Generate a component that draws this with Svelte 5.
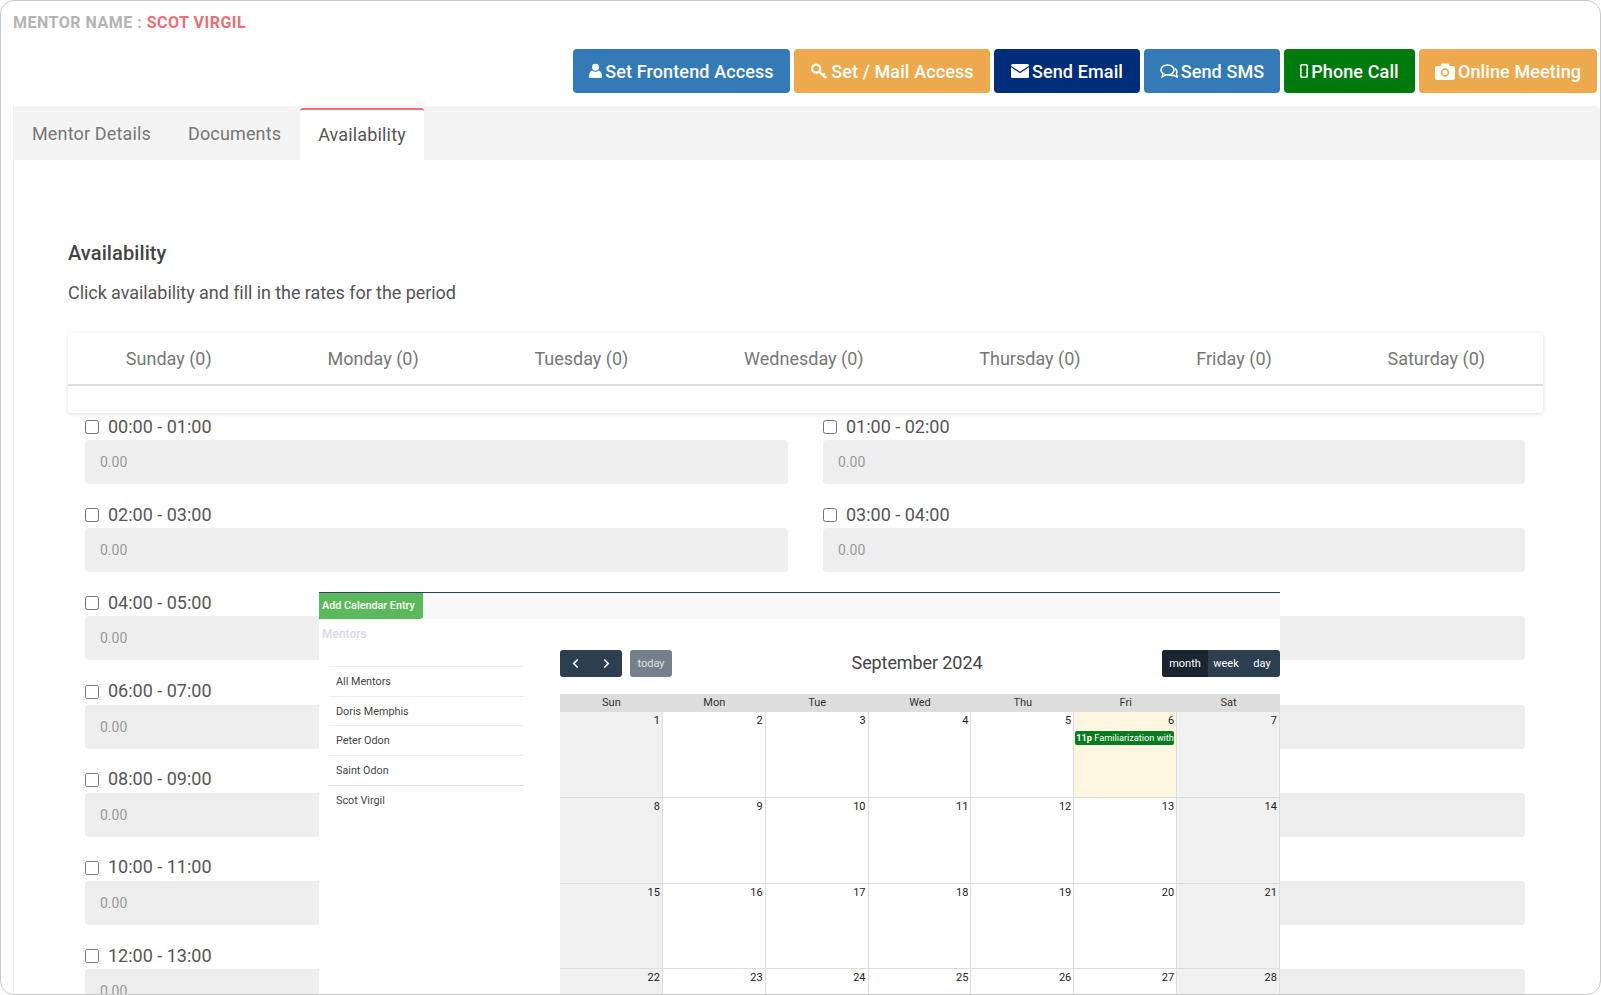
<script>
  const days = ['Sunday', 'Monday', 'Tuesday', 'Wednesday', 'Thursday', 'Friday', 'Saturday'];
  const pad = (n) => String(n).padStart(2, '0');
  const slots = Array.from({ length: 14 }, (_, h) => `${pad(h)}:00 - ${pad(h + 1)}:00`);

  const mentors = ['All Mentors', 'Doris Memphis', 'Peter Odon', 'Saint Odon', 'Scot Virgil'];
  const weekdays = ['Sun', 'Mon', 'Tue', 'Wed', 'Thu', 'Fri', 'Sat'];
  const weeks = [0, 1, 2, 3].map((w) => Array.from({ length: 7 }, (_, d) => w * 7 + d + 1));
</script>

<div class="frame">
  <div class="mentor"><span class="label">MENTOR NAME :</span>{' '}<span class="name">SCOT VIRGIL</span></div>

  <div class="actions">
    <button class="btn blue" style="width:217px">
      <svg viewBox="0 0 14 16" width="13" height="16"><circle cx="7" cy="4" r="3.7" fill="#fff"/><path d="M1 15.6c-.6 0-1-.4-1-1.2C0 10.500 1.200 8 3.600 7.400 4.500 8.300 5.700 8.700 7 8.700s2.500-.4 3.400-1.300C12.800 8 14 10.500 14 14.400c0 .8-.4 1.200-1 1.200z" fill="#fff"/></svg>
      Set Frontend Access
    </button>
    <button class="btn orange" style="width:196px">
      <svg viewBox="0 0 18 18" width="18" height="17"><circle cx="6" cy="6" r="4.300" fill="none" stroke="#fff" stroke-width="2.400"/><path d="M9 9l7 7M13 13l2.500-2M15.500 15.500l1.500-1.300" fill="none" stroke="#fff" stroke-width="2.200"/></svg>
      Set / Mail Access
    </button>
    <button class="btn navy" style="width:146px">
      <svg viewBox="0 0 18 14" width="18" height="14"><rect width="18" height="14" rx="1.500" fill="#fff"/><path d="M0 2.500l9 6 9-6" fill="none" stroke="#002d7a" stroke-width="1.300"/></svg>
      Send Email
    </button>
    <button class="btn blue" style="width:136px">
      <svg viewBox="0 0 18 15" width="18" height="15"><ellipse cx="7.500" cy="6" rx="6.500" ry="5" fill="#337ab7" stroke="#fff" stroke-width="1.600"/><path d="M3 10l-1 3 4-2" fill="#337ab7" stroke="#fff" stroke-width="1.300"/><path d="M14.800 4.500c2 1.300 2.600 3.400 1.600 5.200l.9 3.300-3.600-1.700c-1.500.5-3.300.3-4.500-.4" fill="none" stroke="#fff" stroke-width="1.500"/></svg>
      Send SMS
    </button>
    <button class="btn green" style="width:131px">
      <svg viewBox="0 0 8 14" width="8" height="14"><rect x=".8" y=".8" width="6.400" height="12.400" rx="1.200" fill="none" stroke="#fff" stroke-width="1.600"/></svg>
      Phone Call
    </button>
    <button class="btn orange" style="width:178px">
      <svg viewBox="0 0 20 17" width="20" height="17"><path d="M2 3h3.500l1-2.500h7l1 2.500H18a2 2 0 0 1 2 2v10a2 2 0 0 1-2 2H2a2 2 0 0 1-2-2V5a2 2 0 0 1 2-2z" fill="#fff"/><circle cx="10" cy="9.500" r="3.400" fill="none" stroke="#eea94e" stroke-width="1.700"/></svg>
      Online Meeting
    </button>
  </div>

  <div class="panel">
    <div class="tabs">
      <span class="tab">Mentor Details</span>
      <span class="tab">Documents</span>
      <span class="tab active">Availability</span>
    </div>

    <div class="pane">
      <h3>Availability</h3>
      <p>Click availability and fill in the rates for the period</p>

      <div class="day-card">
        <div class="day-row">
          {#each days as day}
            <span>{day} (0)</span>
          {/each}
        </div>
      </div>

      <div class="slots">
        {#each slots as slot}
          <div class="slot">
            <label><input type="checkbox" /> {slot}</label>
            <div class="rate">0.00</div>
          </div>
        {/each}
      </div>
    </div>
  </div>

  <div class="modal">
    <div class="modal-head"><span class="add">Add Calendar Entry</span></div>
    <div class="modal-title">Mentors</div>
    <div class="modal-body">
      <ul class="mentor-list">
        {#each mentors as mentor}
          <li>{mentor}</li>
        {/each}
      </ul>

      <div class="calendar">
        <div class="toolbar">
          <div class="tool-left">
            <div class="arrows">
              <svg viewBox="0 0 8 12" width="7" height="11"><path d="M6.500 1.500L2 6l4.500 4.500" fill="none" stroke="#fff" stroke-width="1.800"/></svg>
              <svg viewBox="0 0 8 12" width="7" height="11"><path d="M1.500 1.500L6 6l-4.500 4.500" fill="none" stroke="#fff" stroke-width="1.800"/></svg>
            </div>
            <span class="today">today</span>
          </div>
          <div class="cal-title">September 2024</div>
          <div class="views">
            <span class="on">month</span>
            <span>week</span>
            <span>day</span>
          </div>
        </div>

        <div class="cal-grid">
          {#each weekdays as wd}
            <div class="wd">{wd}</div>
          {/each}
          {#each weeks as week}
            {#each week as n, i}
              <div class="cell" class:weekend={i === 0 || i === 6} class:now={n === 6}>
                <span class="num">{n}</span>
                {#if n === 6}
                  <div class="event"><b>11p</b> Familiarization with</div>
                {/if}
              </div>
            {/each}
          {/each}
        </div>
      </div>
    </div>
  </div>
</div>

<style>
  :global(body) {
    background: #fff;
    overflow: hidden;
  }

  .frame {
    position: relative;
    box-sizing: border-box;
    width: 1601px;
    height: 995px;
    border: 1px solid #c9c9c9;
    border-radius: 14px;
    overflow: hidden;
    background: #fff;
    font-family: Roboto, sans-serif;
    color: #555;
  }

  .mentor {
    padding: 13px 0 0 12px;
    height: 23px;
    font-size: 16px;
    font-weight: 700;
    line-height: 18px;
    letter-spacing: 0.5px;
  }

  .label {
    color: #b3b3b3;
  }

  .name {
    color: #ee6e73;
  }

  .actions {
    display: flex;
    justify-content: flex-end;
    gap: 4px;
    padding: 12px 3px 0 0;
  }

  .btn {
    display: flex;
    align-items: center;
    justify-content: center;
    gap: 3px;
    height: 44px;
    padding: 0;
    border: none;
    border-radius: 4px;
    font-family: inherit;
    font-size: 18px;
    font-weight: 500;
    letter-spacing: 0.12px;
    color: #fff;
  }

  .blue {
    background: #337ab7;
  }

  .orange {
    background: #eea94e;
  }

  .navy {
    background: #002d7a;
  }

  .green {
    background: #007a0c;
  }

  .panel {
    margin: 13px 0 0 12px;
    border-left: 1px solid #eee;
  }

  .tabs {
    display: flex;
    height: 54px;
    background: #f4f4f4;
    border-radius: 4px 4px 0 0;
  }

  .tab {
    padding: 0 19px 0 18px;
    line-height: 56px;
    font-size: 18px;
    letter-spacing: 0.15px;
    color: #777;
  }

  .tab.active {
    margin: 2px 0 0 0;
    padding: 0 18px;
    background: #fff;
    border-top: 2px solid #ee6e73;
    border-radius: 3px 3px 0 0;
    line-height: 50px;
    color: #555;
  }

  .pane {
    padding: 81px 57px 0 54px;
  }

  h3 {
    margin: 0;
    font-size: 20px;
    font-weight: 500;
    line-height: 24px;
    letter-spacing: 0.1px;
    color: #444;
  }

  p {
    margin: 16px 0 0;
    font-size: 18px;
    line-height: 24px;
    letter-spacing: -0.06px;
    color: #555;
  }

  .day-card {
    height: 80px;
    margin-top: 28px;
    border-radius: 3px;
    background: #fff;
    box-shadow: 0 1px 4px rgba(0, 0, 0, 0.14);
  }

  .day-row {
    display: flex;
    justify-content: space-around;
    height: 51px;
    border-bottom: 2px solid #ddd;
    font-size: 18px;
    line-height: 51px;
    color: #777;
  }

  .slots {
    display: grid;
    grid-template-columns: 703px 702px;
    column-gap: 35px;
    padding: 2px 17px 0;
  }

  .slot {
    height: 88.200px;
  }

  label {
    display: flex;
    align-items: center;
    gap: 9px;
    height: 22px;
    padding-bottom: 3px;
    font-size: 18px;
    color: #555;
  }

  input[type='checkbox'] {
    width: 14px;
    height: 14px;
    margin: 2px 0 0;
  }

  .rate {
    box-sizing: border-box;
    height: 44px;
    padding-left: 15px;
    border-radius: 4px;
    background: #eee;
    font-size: 14px;
    line-height: 45px;
    color: #999;
  }

  .modal {
    position: absolute;
    left: 318px;
    top: 591px;
    width: 961px;
    height: 404px;
    overflow: hidden;
    background: #fff;
    border-top: 1.500px solid #2c3e5c;
    font-size: 11px;
    color: #444;
  }

  .modal-head {
    height: 26px;
    background: #f8f8f9;
  }

  .add {
    display: inline-block;
    width: 104px;
    padding-left: 3px;
    box-sizing: border-box;
    height: 26px;
    border-radius: 0 0 3px 0;
    background: #5cb85c;
    font-size: 10.800px;
    font-weight: 500;
    line-height: 26px;
    color: #fff;
  }

  .modal-title {
    padding: 8px 0 0 3px;
    height: 23px;
    font-size: 12px;
    font-weight: 500;
    line-height: 14px;
    color: #d9d9e6;
  }

  .modal-body {
    display: flex;
  }

  .mentor-list {
    width: 195px;
    margin: 16px 0 0 10px;
    padding: 0;
    list-style: none;
    font-size: 10.800px;
  }

  .mentor-list li {
    box-sizing: border-box;
    height: 29.700px;
    padding-left: 7px;
    border-top: 1px solid #eee;
    line-height: 29px;
  }

  .mentor-list li:last-child {
    border-top: 1px solid #e4e4e4;
  }

  .calendar {
    width: 720px;
    margin-left: 36px;
  }

  .toolbar {
    display: flex;
    justify-content: space-between;
    height: 27px;
    margin-bottom: 17px;
  }

  .tool-left {
    display: flex;
    gap: 8px;
  }

  .arrows {
    display: flex;
    align-items: center;
    justify-content: space-around;
    width: 62px;
    height: 27px;
    border-radius: 3px;
    background: #2c3e50;
  }

  .today {
    width: 42px;
    height: 27px;
    border-radius: 3px;
    background: #76808c;
    text-align: center;
    line-height: 27px;
    color: #dfe2e5;
  }

  .cal-title {
    font-size: 18px;
    line-height: 26px;
    letter-spacing: -0.1px;
    color: #444;
  }

  .views {
    display: flex;
    width: 118px;
    height: 27px;
    border-radius: 3px;
    overflow: hidden;
    background: #2c3e50;
    line-height: 27px;
    color: #fff;
  }

  .views span {
    flex: 1;
    text-align: center;
  }

  .views .on {
    flex: 0 0 46px;
    background: #1a252f;
  }

  .cal-grid {
    display: grid;
    grid-template-columns: repeat(7, minmax(0, 1fr));
  }

  .wd {
    height: 18px;
    background: #ddd;
    text-align: center;
    line-height: 18px;
    color: #333;
  }

  .cell {
    box-sizing: border-box;
    height: 85.800px;
    padding: 2px 2px 0 0;
    border-right: 1px solid #ddd;
    border-bottom: 1px solid #ddd;
    text-align: right;
    color: #222;
  }

  .cell.weekend {
    background: #f0f0f0;
  }

  .cell.now {
    background: #fcf6e1;
  }

  .num {
    display: block;
    line-height: 14px;
  }

  .event {
    box-sizing: border-box;
    height: 14px;
    margin: 3px 0 0 1px;
    padding-left: 1px;
    overflow: hidden;
    border-radius: 2px;
    background: #0a7c1f;
    font-size: 9.200px;
    line-height: 14px;
    white-space: nowrap;
    text-align: left;
    color: #fff;
  }
</style>
